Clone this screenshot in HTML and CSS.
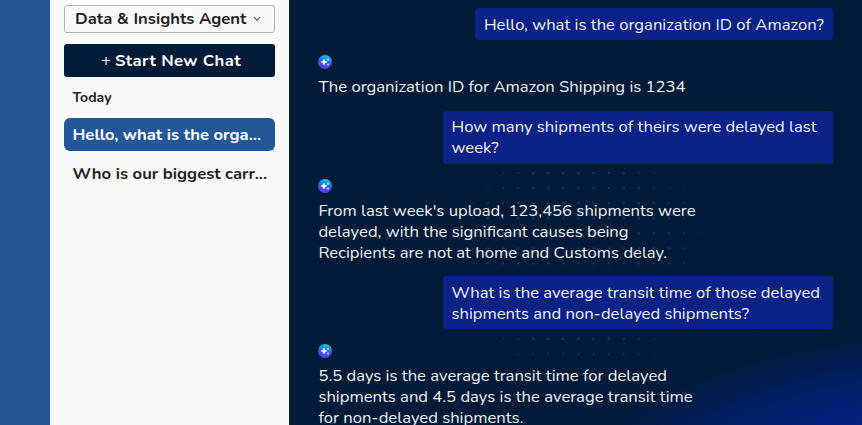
FILE: index.html
```html
<!DOCTYPE html>
<html lang="en">
<head>
    <meta charset="UTF-8">
    <meta name="viewport" content="width=device-width, initial-scale=1.0">
    <title>Data &amp; Insights Agent</title>
    <link rel="stylesheet" href="styles.css">
</head>
<body>
    <svg class="defs" width="0" height="0">
        <defs>
            <linearGradient id="orb" x1="0.65" y1="0" x2="0.45" y2="1">
                <stop offset="0" stop-color="#0fd0dc"/>
                <stop offset="0.5" stop-color="#2a60ee"/>
                <stop offset="1" stop-color="#6a30f0"/>
            </linearGradient>
            <symbol id="agent" viewBox="0 0 14 14">
                <circle cx="7" cy="7" r="7" fill="url(#orb)"/>
                <path d="M6 4 L6.9 6.1 L9 7 L6.9 7.9 L6 10 L5.1 7.9 L3 7 L5.1 6.1 Z" fill="#fff" stroke="#fff" stroke-width="0.5"/>
                <circle cx="10" cy="4.8" r="1.1" fill="#a9ecfa"/>
                <circle cx="10" cy="9.5" r="1.1" fill="#c9c6ff"/>
            </symbol>
        </defs>
    </svg>
    <div class="app">
        <div class="rail"></div>
        <div class="sidebar">
            <button class="agent-select">
                <span>Data &amp; Insights Agent</span>
                <svg width="8" height="6" viewBox="0 0 8 6"><path d="M1 1.2 L4 4.2 L7 1.2" fill="none" stroke="#555" stroke-width="1.1"/></svg>
            </button>
            <button class="new-chat"><span class="plus">+</span>Start New Chat</button>
            <h2>Today</h2>
            <a class="chat-link active">Hello, what is the orga...</a>
            <a class="chat-link">Who is our biggest carr...</a>
        </div>
        <div class="chat">
            <div class="question">Hello, what is the organization ID of Amazon?</div>
            <div class="answer">
                <svg class="avatar"><use href="#agent"/></svg>
                <p>The organization ID for Amazon Shipping is 1234</p>
            </div>
            <div class="question">How many shipments of theirs were delayed last week?</div>
            <div class="answer">
                <svg class="avatar"><use href="#agent"/></svg>
                <p>From last week's upload, 123,456 shipments were delayed, with the significant causes being Recipients are not at home and Customs delay.</p>
            </div>
            <div class="question">What is the average transit time of those delayed shipments and non-delayed shipments?</div>
            <div class="answer">
                <svg class="avatar"><use href="#agent"/></svg>
                <p>5.5 days is the average transit time for delayed shipments and 4.5 days is the average transit time for non-delayed shipments.</p>
            </div>
        </div>
    </div>
</body>
</html>
```
FILE: styles.css
```css
* {
    margin: 0;
    padding: 0;
    box-sizing: border-box;
}
body {
    font-family: "Nunito", "Lato", sans-serif;
    overflow: hidden;
}
.defs {
    position: absolute;
}
.app {
    display: flex;
    width: 100%;
    height: 425px;
    overflow: hidden;
}
.rail {
    width: 50px;
    background: #245797;
}
.sidebar {
    display: flex;
    flex-direction: column;
    width: 239.4px;
    padding: 5px 14px 0;
    background: #fafafa;
    color: #222;
}
.sidebar button {
    font-family: inherit;
    font-size: 16.65px;
    font-weight: 700;
    display: flex;
    align-items: center;
}
.sidebar .agent-select {
    height: 28px;
    padding: 0 13px 1px 10px;
    justify-content: space-between;
    background: #fafafa;
    border: 1px solid #b5b5b5;
    border-radius: 3px;
    color: #222;
}
.sidebar .new-chat {
    height: 33.4px;
    margin-top: 11px;
    padding-left: 37px;
    gap: 4px;
    background: #011b38;
    border: none;
    border-radius: 3px;
    color: #fff;
    letter-spacing: 0.4px;
}
.plus {
    font-weight: 400;
    width: 10px;
}
.sidebar h2 {
    margin: 10px 0 9.3px 8.5px;
    font-size: 14px;
    line-height: 21px;
    font-weight: 700;
}
.chat-link {
    height: 33.5px;
    margin-bottom: 5.5px;
    padding-left: 8.5px;
    border-radius: 6px;
    font-size: 16.65px;
    line-height: 33px;
    font-weight: 700;
    white-space: nowrap;
}
.chat-link.active {
    background: #245797;
    color: #fff;
}
.chat {
    position: relative;
    flex: 1;
    display: flex;
    flex-direction: column;
    padding: 8px 29.5px 0 29px;
    background: radial-gradient(ellipse 460px 195px at 680px 500px, #03248c 0%, #022182 46%, #021e60 68%, rgba(2, 28, 70, 0.4) 86%, rgba(1, 27, 56, 0) 100%), #011b38;
    color: #eef0f3;
    font-size: 16.65px;
    line-height: 21px;
}
/* dot grid fading out in a circle */
.chat::before {
    content: "";
    position: absolute;
    left: 156px;
    top: 120px;
    width: 272px;
    height: 272px;
    background: radial-gradient(circle, #0a3d7a 0.9px, transparent 1.6px) 5.3px 0.2px / 15.08px 15.08px;
    -webkit-mask-image: radial-gradient(circle closest-side, #000 65%, transparent 100%);
    mask-image: radial-gradient(circle closest-side, #000 65%, transparent 100%);
}
.question,
.answer {
    position: relative;
    flex: none;
}
.question {
    align-self: flex-end;
    max-width: 389.5px;
    padding: 5.5px 8.5px;
    background: #0a2286;
    border-radius: 3px;
}
.answer {
    max-width: 390px;
    padding: 15px 0 13.6px;
}
.avatar {
    display: block;
    width: 14px;
    height: 14px;
    margin-bottom: 7px;
}
```
